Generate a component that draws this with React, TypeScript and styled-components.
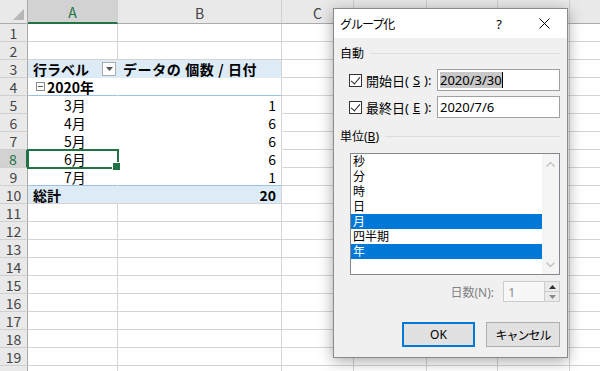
import React from "react";
import styled, { createGlobalStyle, css } from "styled-components";

const GlobalStyle = createGlobalStyle`
  html, body { margin: 0; padding: 0; background: #fff; }
  body { font-family: "Noto Sans CJK JP", "Noto Sans", sans-serif; }
  * { box-sizing: border-box; }
`;

const COLS = ["A", "B", "C", "D", "E", "F", "G"];
const COL_WIDTHS = [90, 164, 72, 73, 71, 72, 72];
const ROW_COUNT = 20;

const GRID = "#d4d4d4";
const BLUE = "#ddebf7";
const PIVOT_LINE = "#9bc2e6";
const GREEN = "#217346";
const UI_FONT = `"Noto Sans", "Noto Sans CJK JP", sans-serif`;

const months = [
  { row: 5, label: "3月", count: 1 },
  { row: 6, label: "4月", count: 6 },
  { row: 7, label: "5月", count: 6 },
  { row: 8, label: "6月", count: 6 },
  { row: 9, label: "7月", count: 1 },
];

const units = [
  { label: "秒", selected: false },
  { label: "分", selected: false },
  { label: "時", selected: false },
  { label: "日", selected: false },
  { label: "月", selected: true },
  { label: "四半期", selected: false },
  { label: "年", selected: true },
];

type CellProps = {
  $fill?: string;
  $right?: string;
  $bottom?: string;
  $align?: "left" | "right";
  $bold?: boolean;
  $indent?: number;
  $selected?: boolean;
};

function pivotCell(row: number, col: number) {
  const props: CellProps = {};
  let content: React.ReactNode = null;
  if (col > 1 || row < 3 || row > 10) return { props, content };

  const fill = row === 3 || row === 10 ? BLUE : "#fff";
  props.$fill = fill;
  if (col === 0) props.$right = fill;
  if (row === 3) props.$bottom = BLUE;
  else if (row === 4 || row === 9) props.$bottom = PIVOT_LINE;
  else if (row < 10) props.$bottom = "#fff";

  if (row === 3) {
    props.$bold = true;
    content =
      col === 0 ? (
        <>
          行ラベル
          <FilterButton>
            <svg width="7" height="4" viewBox="0 0 7 4">
              <path d="M0 0h7L3.5 4z" fill="#555" />
            </svg>
          </FilterButton>
        </>
      ) : (
        <Spaced>データの 個数 / 日付</Spaced>
      );
  } else if (row === 4) {
    if (col === 0) {
      props.$bold = true;
      props.$indent = 8;
      content = (
        <>
          <Collapse />
          2020年
        </>
      );
    }
  } else if (row === 10) {
    props.$bold = true;
    if (col === 0) content = "総計";
    else {
      props.$align = "right";
      content = "20";
    }
  } else {
    const m = months.find((x) => x.row === row)!;
    if (col === 0) {
      props.$indent = 36;
      props.$selected = row === 8;
      content = m.label;
    } else {
      props.$align = "right";
      content = m.count;
    }
  }
  return { props, content };
}

export default function App() {
  return (
    <Page>
      <GlobalStyle />
      <Sheet>
        <Corner />
        {COLS.map((c, i) => (
          <ColHeader key={c} $active={i === 0}>
            {c}
          </ColHeader>
        ))}
        {Array.from({ length: ROW_COUNT }, (_, r) => {
          const row = r + 1;
          return (
            <React.Fragment key={row}>
              <RowHeader $active={row === 8}>{row}</RowHeader>
              {COLS.map((c, col) => {
                const { props, content } = pivotCell(row, col);
                return (
                  <Cell key={c} {...props}>
                    {content}
                  </Cell>
                );
              })}
            </React.Fragment>
          );
        })}
      </Sheet>

      <Dialog>
        <TitleBar>
          <Title>グループ化</Title>
          <HelpButton>?</HelpButton>
          <CloseButton>
            <svg width="11" height="11" viewBox="0 0 11 11">
              <path d="M0.5 0.5l10 10M10.5 0.5l-10 10" stroke="#000" strokeWidth="1" />
            </svg>
          </CloseButton>
        </TitleBar>
        <Body>
          <GroupHeader>自動</GroupHeader>
          <FieldRow>
            <CheckLabel>
              <CheckBox />
              開始日(<u>S</u>):
            </CheckLabel>
            <TextBox>
              <Selection>2020/3/30</Selection>
              <Caret />
            </TextBox>
          </FieldRow>
          <FieldRow $gap={5}>
            <CheckLabel>
              <CheckBox />
              最終日(<u>E</u>):
            </CheckLabel>
            <TextBox>2020/7/6</TextBox>
          </FieldRow>
          <GroupHeader $gap={10}>
            <span>
              単位(<u>B</u>)
            </span>
          </GroupHeader>
          <ListBox>
            <Items>
              {units.map((u) => (
                <Item key={u.label} $selected={u.selected}>
                  {u.label}
                </Item>
              ))}
            </Items>
            <ScrollBar>
              <svg width="9" height="6" viewBox="0 0 9 6">
                <path d="M0.5 5.5l4-4 4 4" fill="none" stroke="#c2c2c2" strokeWidth="1.4" />
              </svg>
              <svg width="9" height="6" viewBox="0 0 9 6">
                <path d="M0.5 0.5l4 4 4-4" fill="none" stroke="#c2c2c2" strokeWidth="1.4" />
              </svg>
            </ScrollBar>
          </ListBox>
          <SpinRow>
            <DimLabel>日数(N):</DimLabel>
            <SpinBox>
              <SpinValue>1</SpinValue>
              <SpinButtons>
                <SpinArrow>
                  <svg width="7" height="4" viewBox="0 0 7 4">
                    <path d="M0 4h7L3.5 0z" fill="#333" />
                  </svg>
                </SpinArrow>
                <SpinArrow>
                  <svg width="7" height="4" viewBox="0 0 7 4">
                    <path d="M0 0h7L3.5 4z" fill="#888" />
                  </svg>
                </SpinArrow>
              </SpinButtons>
            </SpinBox>
          </SpinRow>
          <Buttons>
            <Button $default>OK</Button>
            <Button>キャンセル</Button>
          </Buttons>
        </Body>
      </Dialog>
    </Page>
  );
}

const Page = styled.div`
  position: relative;
  width: 600px;
  height: 371px;
  overflow: hidden;
  background: #fff;
`;

const Sheet = styled.div`
  display: grid;
  grid-template-columns: 28px ${COL_WIDTHS.map((w) => `${w}px`).join(" ")};
  grid-template-rows: 24px repeat(${ROW_COUNT}, 18px);
  font-family: "Noto Sans CJK JP", sans-serif;
`;

const Corner = styled.div`
  position: relative;
  background: #e9e9e9;
  border-right: 1px solid #ababab;
  border-bottom: 1px solid #ababab;
  &::after {
    content: "";
    position: absolute;
    right: 3px;
    bottom: 3px;
    border-style: solid;
    border-width: 0 0 11px 11px;
    border-color: transparent transparent #b7b7b7 transparent;
  }
`;

const ColHeader = styled.div<{ $active?: boolean }>`
  display: flex;
  align-items: center;
  justify-content: center;
  font-size: 14px;
  line-height: 1;
  padding-top: 2px;
  color: ${(p) => (p.$active ? GREEN : "#444")};
  background: ${(p) => (p.$active ? "#d2d2d2" : "#e9e9e9")};
  border-right: 1px solid #cfcfcf;
  border-bottom: ${(p) => (p.$active ? `2px solid ${GREEN}` : "1px solid #ababab")};
`;

const RowHeader = styled.div<{ $active?: boolean }>`
  display: flex;
  align-items: center;
  justify-content: center;
  font-size: 14px;
  line-height: 1;
  color: ${(p) => (p.$active ? GREEN : "#444")};
  background: ${(p) => (p.$active ? "#d2d2d2" : "#e9e9e9")};
  border-right: ${(p) => (p.$active ? `2px solid ${GREEN}` : "1px solid #ababab")};
  border-bottom: 1px solid #cfcfcf;
`;

const Cell = styled.div<CellProps>`
  position: relative;
  display: flex;
  align-items: center;
  justify-content: ${(p) => (p.$align === "right" ? "flex-end" : "flex-start")};
  padding: 0 5px 0 ${(p) => p.$indent ?? 5}px;
  background: ${(p) => p.$fill ?? "#fff"};
  border-right: 1px solid ${(p) => p.$right ?? GRID};
  border-bottom: 1px solid ${(p) => p.$bottom ?? GRID};
  font-size: 14px;
  line-height: 1;
  font-weight: ${(p) => (p.$bold ? 700 : 400)};
  color: #000;
  white-space: nowrap;
  ${(p) =>
    p.$selected &&
    css`
      outline: 2px solid ${GREEN};
      outline-offset: -1px;
      z-index: 1;
      &::after {
        content: "";
        position: absolute;
        right: -4px;
        bottom: -4px;
        width: 7px;
        height: 7px;
        background: ${GREEN};
        border: 1px solid #fff;
      }
    `}
`;

const Spaced = styled.span`
  letter-spacing: 0.6px;
`;

const FilterButton = styled.span`
  display: flex;
  align-items: center;
  justify-content: center;
  width: 14px;
  height: 14px;
  margin-left: auto;
  margin-right: -4px;
  background: #fff;
  border: 1px solid #ababab;
`;

const Collapse = styled.span`
  position: relative;
  width: 9px;
  height: 9px;
  margin-right: 2px;
  border: 1px solid #8a8a8a;
  background: #fff;
  &::after {
    content: "";
    position: absolute;
    left: 1px;
    right: 1px;
    top: 3px;
    height: 1px;
    background: #555;
  }
`;

const Dialog = styled.div`
  position: absolute;
  left: 333px;
  top: 8px;
  width: 235px;
  height: 350px;
  display: flex;
  flex-direction: column;
  background: #f0f0f0;
  border: 1px solid #8a8a8a;
  box-shadow: 0 3px 14px rgba(0, 0, 0, 0.35);
  font-family: ${UI_FONT};
  font-size: 12px;
  color: #000;
`;

const TitleBar = styled.div`
  display: flex;
  align-items: center;
  height: 29px;
  padding-left: 6px;
  background: #fff;
`;

const Title = styled.div`
  font-size: 12px;
  letter-spacing: -1px;
`;

const HelpButton = styled.div`
  margin-left: auto;
  width: 30px;
  text-align: center;
  font-size: 13px;
`;

const CloseButton = styled.div`
  display: flex;
  align-items: center;
  justify-content: center;
  width: 46px;
  margin-left: 7px;
`;

const Body = styled.div`
  display: flex;
  flex-direction: column;
  padding: 0 7px 0 5px;
`;

const GroupHeader = styled.div<{ $gap?: number }>`
  display: flex;
  align-items: center;
  gap: 6px;
  height: 16px;
  margin-top: ${(p) => p.$gap ?? 7}px;
  padding-left: 1px;
  font-size: 12px;
  &::after {
    content: "";
    flex: 1;
    height: 1px;
    background: #dcdcdc;
  }
`;

const FieldRow = styled.div<{ $gap?: number }>`
  display: grid;
  grid-template-columns: 88px 1fr;
  align-items: center;
  height: 22px;
  margin-top: ${(p) => p.$gap ?? 8}px;
  padding-left: 10px;
`;

const CheckLabel = styled.div`
  display: flex;
  align-items: center;
  gap: 4px;
  font-size: 13px;
  white-space: nowrap;
`;

const CheckBox = styled.span`
  position: relative;
  width: 13px;
  height: 13px;
  border: 1px solid #333;
  background: #fff;
  &::after {
    content: "";
    position: absolute;
    left: 3px;
    top: 0px;
    width: 4px;
    height: 8px;
    border: solid #222;
    border-width: 0 1px 1px 0;
    transform: rotate(40deg);
  }
`;

const TextBox = styled.div`
  display: flex;
  align-items: center;
  height: 22px;
  padding-left: 2px;
  background: #fff;
  border: 1px solid #a0a0a0;
  font-size: 13px;
`;

const Selection = styled.span`
  background: #c8c8c8;
  line-height: 16px;
`;

const Caret = styled.span`
  width: 1px;
  height: 16px;
  background: #000;
`;

const ListBox = styled.div`
  display: flex;
  height: 122px;
  margin: 9px 0 0 11px;
  background: #fff;
  border: 1px solid #828790;
`;

const Items = styled.div`
  flex: 1;
  display: flex;
  flex-direction: column;
`;

const Item = styled.div<{ $selected?: boolean }>`
  height: 15px;
  line-height: 15px;
  padding-left: 2px;
  font-size: 12px;
  background: ${(p) => (p.$selected ? "#0078d7" : "transparent")};
  color: ${(p) => (p.$selected ? "#fff" : "#000")};
`;

const ScrollBar = styled.div`
  width: 17px;
  display: flex;
  flex-direction: column;
  align-items: center;
  justify-content: space-between;
  padding: 7px 0 6px;
  background: #f5f5f5;
`;

const SpinRow = styled.div`
  display: flex;
  align-items: center;
  justify-content: flex-end;
  gap: 9px;
  height: 21px;
  margin-top: 6px;
`;

const DimLabel = styled.div`
  color: #838383;
  font-size: 12px;
`;

const SpinBox = styled.div`
  display: flex;
  width: 57px;
  height: 21px;
  background: #f7f7f7;
  border: 1px solid #cccccc;
`;

const SpinValue = styled.div`
  flex: 1;
  display: flex;
  align-items: center;
  padding-left: 4px;
  color: #909090;
  font-size: 13px;
`;

const SpinButtons = styled.div`
  display: flex;
  flex-direction: column;
  width: 15px;
  border-left: 1px solid #cccccc;
`;

const SpinArrow = styled.div`
  flex: 1;
  display: flex;
  align-items: center;
  justify-content: center;
  background: #eaeaea;
  & + & {
    border-top: 1px solid #cccccc;
  }
`;

const Buttons = styled.div`
  display: flex;
  justify-content: flex-end;
  gap: 11px;
  margin-top: 20px;
`;

const Button = styled.div<{ $default?: boolean }>`
  display: flex;
  align-items: center;
  justify-content: center;
  width: ${(p) => (p.$default ? 73 : 74)}px;
  height: 25px;
  background: #e1e1e1;
  border: ${(p) => (p.$default ? "2px solid #0078d7" : "1px solid #adadad")};
  font-size: 12px;
  letter-spacing: ${(p) => (p.$default ? 0 : -1)}px;
`;
